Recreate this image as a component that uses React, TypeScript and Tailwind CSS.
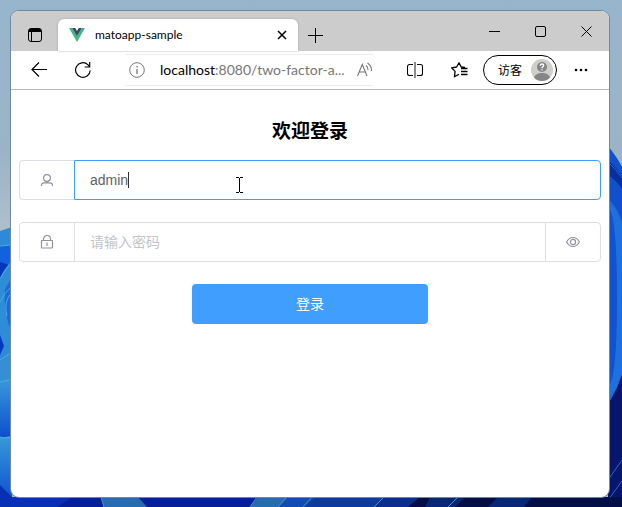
import { useState } from 'react';
import type { ReactNode } from 'react';

interface ToolButtonProps {
  label: string;
  className?: string;
  children: ReactNode;
}

export default function App() {
  return (
    <div className="relative flex min-h-screen flex-col pt-[11px] pr-[13px] pb-[10px] pl-[11px] font-[Lato,'Noto_Sans_CJK_SC',sans-serif] text-black">
      <Wallpaper />
      <div className="relative flex grow flex-col overflow-hidden rounded-lg bg-white shadow-[0_0_0_1px_#71899b]">
        <TitleBar />
        <Toolbar />
        <LoginPage />
      </div>
    </div>
  );
}

function TitleBar() {
  return (
    <header className="flex h-10 items-end bg-[#cccccc]">
      <ToolButton label="Tab actions" className="h-8 w-[47px]">
        <svg width="16" height="16" viewBox="0 0 16 16" fill="none" stroke="currentColor">
          <rect x="1.5" y="1.5" width="13" height="13" rx="2.5" />
          <path d="M2 3h12M2 4h12" strokeWidth="2" />
          <path d="M4.5 5v9" />
        </svg>
      </ToolButton>
      <div className="flex h-8 w-60 items-center rounded-t-md bg-white pr-2 pl-[11px] shadow-[0_0_2px_#999999]">
        <svg width="16" height="16" viewBox="0 0 16 16">
          <path d="M0 1h3.2L8 9.2 12.8 1H16L8 15z" fill="#41b883" />
          <path d="M3.2 1h3L8 4.1 9.8 1h3L8 9.2z" fill="#35495e" />
        </svg>
        <span className="ml-[10px] grow truncate text-xs">matoapp-sample</span>
        <ToolButton label="Close tab" className="size-4">
          <svg width="16" height="16" viewBox="0 0 16 16" stroke="currentColor" strokeWidth="1.5">
            <path d="M4 4l8 8M12 4l-8 8" />
          </svg>
        </ToolButton>
      </div>
      <ToolButton label="New tab" className="h-8 w-[35px]">
        <svg width="15" height="15" viewBox="0 0 15 15" stroke="currentColor">
          <path d="M7.5 0v15M0 7.5h15" />
        </svg>
      </ToolButton>
      <div className="ml-auto flex h-10">
        <ToolButton label="Minimize" className="w-[46px]">
          <svg width="11" height="11" viewBox="0 0 11 11" stroke="currentColor">
            <path d="M0 5.5h11" />
          </svg>
        </ToolButton>
        <ToolButton label="Maximize" className="w-[46px]">
          <svg width="11" height="11" viewBox="0 0 11 11" fill="none" stroke="currentColor">
            <rect x="0.5" y="0.5" width="10" height="10" rx="1.5" />
          </svg>
        </ToolButton>
        <ToolButton label="Close" className="w-[46px]">
          <svg width="11" height="11" viewBox="0 0 11 11" stroke="currentColor">
            <path d="M0.5 0.5l10 10M10.5 0.5l-10 10" />
          </svg>
        </ToolButton>
      </div>
    </header>
  );
}

function Toolbar() {
  return (
    <nav className="flex h-[39px] items-center border-b border-[#b8b8b8] pr-[14px] pl-[6px]">
      <ToolButton label="Back" className="h-8 w-11">
        <svg width="16" height="16" viewBox="0 0 16 16" fill="none" stroke="currentColor" strokeWidth="1.2">
          <path d="M16 7.5H1M8 0.5l-7 7 7 7" />
        </svg>
      </ToolButton>
      <ToolButton label="Refresh" className="h-8 w-11">
        <svg width="16" height="16" viewBox="0 0 16 16" fill="none" stroke="currentColor" strokeWidth="1.2">
          <path d="M15.2 8.5A7.3 7.3 0 1 1 12.8 2.6l1.7 2" />
          <path d="M14.7 0v5h-5" />
        </svg>
      </ToolButton>
      <div className="ml-5 flex h-8 min-w-0 flex-1 items-center border-y border-[#ececec] pl-1">
        <svg width="16" height="16" viewBox="0 0 16 16" fill="none" stroke="#767676" className="shrink-0">
          <circle cx="8" cy="8" r="7.3" />
          <path d="M8 7v5M8 4v1.5" strokeWidth="1.3" />
        </svg>
        <span className="ml-[15px] min-w-0 grow overflow-hidden text-sm whitespace-nowrap text-[#767676]">
          <span className="text-black">localhost</span>:8080/two-factor-a...
        </span>
        <ToolButton label="Read aloud" className="h-7 w-4 text-[#767676]">
          <svg width="16" height="16" viewBox="0 0 16 16" fill="none" stroke="currentColor" strokeWidth="1.1">
            <path d="M0.5 14L5.3 2.5 10 14M2.2 10h6.2" />
            <path d="M9 3.5q2.4 1.8 2 4.700M10.500 1q4.500 3 4 8" />
          </svg>
        </ToolButton>
      </div>
      <ToolButton label="Split screen" className="ml-5 h-8 w-11">
        <svg width="16" height="16" viewBox="0 0 16 16" fill="none" stroke="currentColor" strokeWidth="1.1">
          <path d="M6 2.5H2.5a2 2 0 0 0-2 2v7a2 2 0 0 0 2 2H6M10 2.5h3.5a2 2 0 0 1 2 2v7a2 2 0 0 1-2 2H10" />
          <path d="M8 0v16" stroke="#707070" strokeWidth="1.6" />
        </svg>
      </ToolButton>
      <ToolButton label="Favorites" className="h-8 w-11">
        <svg width="17" height="16" viewBox="0 0 17 16" fill="none" stroke="currentColor" strokeWidth="1.3" strokeLinejoin="round">
          <path d="M14 5.5l-3.8-.5L8 .8 5.6 5l-5 .8 3.5 3.6-.7 5.4L8 12.3" />
          <path d="M10 6.5h6.5M10 9.5h6.5M10 12.5h6.5" />
        </svg>
      </ToolButton>
      <button
        type="button"
        className="ml-[2px] flex h-[30px] w-[74px] shrink-0 items-center justify-between rounded-full border border-black pr-[3px] pl-[14px] font-['Noto_Sans_CJK_SC',sans-serif] text-xs"
      >
        访客
        <svg width="22" height="22" viewBox="0 0 22 22">
          <defs>
            <clipPath id="avatar">
              <circle cx="11" cy="11" r="11" />
            </clipPath>
          </defs>
          <g clipPath="url(#avatar)">
            <rect width="22" height="22" fill="#d0cecb" />
            <circle cx="11" cy="8" r="5" fill="#858585" />
            <ellipse cx="11" cy="19" rx="8" ry="5" fill="#858585" />
            <path d="M9.3 6.7q0-1.7 1.7-1.7t1.7 1.6q0 .9-1.7 1.9v.7M11 10.2v1.3" fill="none" stroke="#ffffff" strokeWidth="1.3" />
          </g>
        </svg>
      </button>
      <ToolButton label="Settings and more" className="ml-[10px] h-8 w-7">
        <svg width="14" height="4" viewBox="0 0 14 4" fill="currentColor">
          <circle cx="2" cy="2" r="1.3" />
          <circle cx="7" cy="2" r="1.3" />
          <circle cx="12" cy="2" r="1.3" />
        </svg>
      </ToolButton>
    </nav>
  );
}

function LoginPage() {
  const [username, setUsername] = useState('admin');
  const [password, setPassword] = useState('');
  const [showPassword, setShowPassword] = useState(false);

  return (
    <main className="grow px-2 pt-7 font-['Liberation_Sans','Noto_Sans_CJK_SC',sans-serif] text-sm">
      <form className="flex flex-col gap-[22px]" onSubmit={(e) => e.preventDefault()}>
        <div>
          <h1 className="mb-[14px] text-center text-[19px] leading-7 font-bold">欢迎登录</h1>
          <div className="relative flex h-10">
            <label
              htmlFor="username"
              className="flex w-[55px] items-center justify-center rounded-l border border-r-0 border-[#dcdfe6] text-[#909399]"
            >
              <svg width="14" height="14" viewBox="0 0 14 14" fill="none" stroke="currentColor" strokeWidth="1.2" aria-label="用户名">
                <circle cx="7" cy="5" r="3.4" />
                <path d="M1.5 13v-1q0-1.600 1.600-1.900L7 9.600l3.900.5q1.600.3 1.600 1.900v1" />
              </svg>
            </label>
            <input
              id="username"
              type="text"
              value={username}
              onChange={(e) => setUsername(e.target.value)}
              className="min-w-0 grow rounded-r border border-[#409eff] px-[15px] text-[#606266] caret-transparent outline-none"
            />
            {/* text caret and mouse pointer */}
            <span className="absolute top-3 left-[109px] h-4 w-px bg-[#303133]" />
            <svg width="7" height="16" viewBox="0 0 7 16" fill="none" stroke="#000000" className="absolute top-[17px] left-[217px]">
              <path d="M0 .5h3M4 .5h3M3.5 1v14M0 15.5h3M4 15.5h3" />
            </svg>
          </div>
        </div>

        <div className="flex h-10 rounded border border-[#dcdfe6] text-[#909399]">
          <label htmlFor="password" className="flex w-[55px] items-center justify-center border-r border-[#dcdfe6]">
            <svg width="14" height="14" viewBox="0 0 14 14" fill="none" stroke="currentColor" strokeWidth="1.2" aria-label="密码">
              <rect x="1.5" y="5.5" width="11" height="7.5" rx="0.5" />
              <path d="M3.5 5.5V4a3.5 3.5 0 0 1 7 0v1.5M7 7.5V11" />
            </svg>
          </label>
          <input
            id="password"
            type={showPassword ? 'text' : 'password'}
            value={password}
            placeholder="请输入密码"
            onChange={(e) => setPassword(e.target.value)}
            className="min-w-0 grow px-[15px] text-[#606266] outline-none placeholder:text-[#c0c4cc]"
          />
          <button
            type="button"
            aria-label="显示密码"
            onClick={() => setShowPassword(!showPassword)}
            className="flex w-[55px] items-center justify-center border-l border-[#dcdfe6]"
          >
            <svg width="14" height="14" viewBox="0 0 14 14" fill="none" stroke="currentColor" strokeWidth="1.2">
              <path d="M.6 7Q3 2.5 7 2.5T13.4 7Q11 11.5 7 11.5T.6 7z" />
              <circle cx="7" cy="7" r="2.6" />
            </svg>
          </button>
        </div>

        <button type="submit" className="h-10 w-[236px] self-center rounded bg-[#409eff] text-white">
          登录
        </button>
      </form>
    </main>
  );
}

function ToolButton({ label, className = '', children }: ToolButtonProps) {
  return (
    <button type="button" aria-label={label} className={`flex shrink-0 items-center justify-center ${className}`}>
      {children}
    </button>
  );
}

function Wallpaper() {
  return (
    <svg
      className="absolute inset-0 h-full w-full"
      viewBox="0 0 622 507"
      preserveAspectRatio="none"
      fill="none"
    >
      <defs>
        <linearGradient id="sky" x1="0" y1="0" x2="0" y2="1">
          <stop offset="0" stopColor="#96b5cc" />
          <stop offset="0.3" stopColor="#9ab4c6" />
          <stop offset="0.5" stopColor="#b4c2cb" />
        </linearGradient>
        <linearGradient id="petal" x1="0" y1="0" x2="0" y2="1">
          <stop offset="0" stopColor="#389ada" />
          <stop offset="1" stopColor="#0a48d0" />
        </linearGradient>
      </defs>
      <rect width="622" height="507" fill="url(#sky)" />

      {/* left petals */}
      <path d="M0 231l12-4v280H0z" fill="#2b8bd8" />
      <path d="M0 246l12-1v14L0 278z" fill="#1261df" />
      <path d="M0 262l12 4v-5L0 279z" fill="#0637bb" />
      <path d="M0 278q5-11 12-17v77L0 350z" fill="#2f8cd7" />
      <path d="M5 289l7-12v56q-9-20-7-44z" fill="#176bdc" />
      <path d="M0 335v20l4-9z" fill="#0637c0" />
      <path d="M0 360q5-6 12-8v27q-7 1-12 4z" fill="#3390d5" />
      <path d="M0 382l12-3v63L0 436z" fill="url(#petal)" />
      <path d="M0 438l12-2v71H0z" fill="url(#petal)" />
      <path d="M0 279q5-10 12-17M0 302q4-9 12-16M12 292q-9 10-5 24M0 360l12-8M0 382l12-3M0 438l12-1M0 246l12-1" stroke="#49abdf" />

      {/* right petals */}
      <path d="M608 146q9 11 14 21v340h-14z" fill="#1050ca" />
      <path d="M608 160q9 8 14 17v12q-6-9-14-14z" fill="#082f9e" />
      <path d="M608 199q11 10 14 25v151q-4 18-14 32z" fill="#1e70df" />
      <path d="M608 206q9 8 9 92t-9 88z" fill="#1153ce" />
      <path d="M608 404q9-15 14-30v133h-14z" fill="#05166b" />
      <path d="M608 162q8 7 14 16M608 199q9 9 14 24M608 403q10-15 14-30M608 480l14-20M608 500l14-19" stroke="#2469c5" />

      {/* bottom petals */}
      <path d="M0 497h622v10H0z" fill="#03209a" />
      <path d="M0 485l12 12h60l-15 10H0z" fill="#0830b4" />
      <path d="M101 497h37l9 10h-43z" fill="#286bb5" />
      <path d="M258 497h58l-14 10h-52z" fill="#256cb5" />
      <path d="M288 497h96l-10 10h-96z" fill="#104cb4" />
      <path d="M316 497h70l-10 10h-72z" fill="#0c3aa0" />
      <path d="M384 497h36l-10 10h-36z" fill="#092d91" />
      <path d="M420 497h202v10H408z" fill="#030d46" />
      <path d="M430 497h35l-10 10h-30zM498 497h34l-8 10h-36z" fill="#082676" />
      <path d="M101 497l3 10M257 497l-7 10M287 497l-9 10M312 497l-9 10M384 497l-10 10M458 497l-10 10" stroke="#4a91c5" />
    </svg>
  );
}
